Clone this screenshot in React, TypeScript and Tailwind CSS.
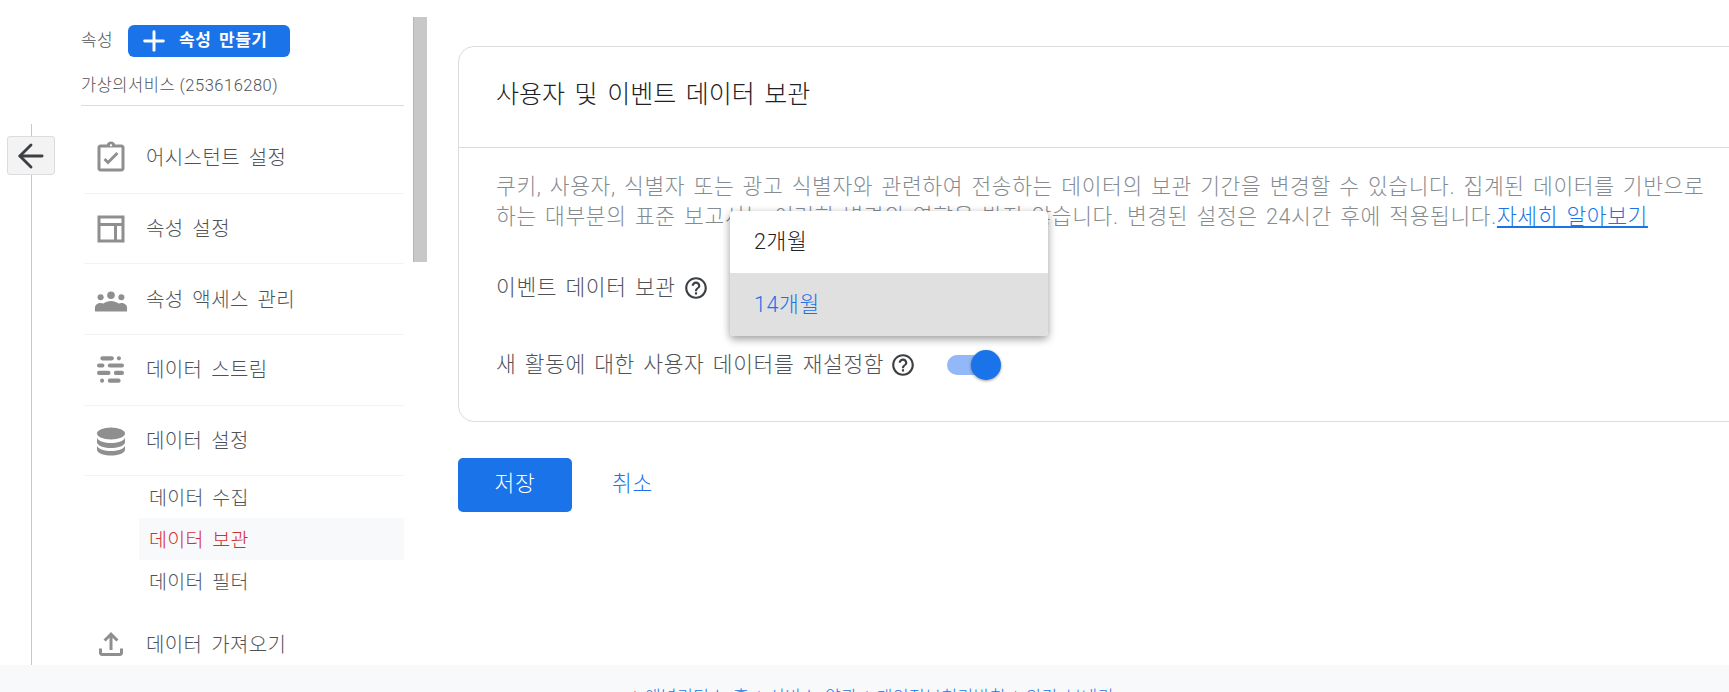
import { ArrowLeft, Plus } from "lucide-react";

const AssistantIcon = () => (
  <svg width="36" height="36" viewBox="0 0 24 24" fill="#8f8f8f">
    <path d="M19 3h-4.180C14.400 1.840 13.300 1 12 1s-2.400.84-2.820 2H5c-1.100 0-2 .9-2 2v14c0 1.100.9 2 2 2h14c1.100 0 2-.9 2-2V5c0-1.100-.9-2-2-2zm-7-.25c.41 0 .75.34.75.75s-.34.75-.75.75-.75-.34-.75-.75.34-.75.75-.75zM19 19H5V5h14v14zm-2-9.600L15.600 8l-5.600 5.600-1.600-1.600L7 13.400l3 3z" />
  </svg>
);

const LayoutIcon = () => (
  <svg width="36" height="36" viewBox="0 0 24 24" fill="#8f8f8f">
    <path d="M3 3v18h18V3H3zm16 2v3H5V5h14zM5 19v-9h9v9H5zm11 0v-9h3v9h-3z" />
  </svg>
);

const PeopleIcon = () => (
  <svg width="34" height="24" viewBox="0 0 36 24" fill="#8f8f8f" className="mt-[4px]">
    <circle cx="18" cy="6" r="4" />
    <circle cx="7" cy="8" r="3.200" />
    <circle cx="29" cy="8" r="3.200" />
    <path d="M1 23v-4c0-3 3-5 6-5 1 0 2 .2 3 .7C12 13 15 12 18 12s6 1 8 2.700c1-.5 2-.7 3-.7 3 0 6 2 6 5v4z" />
  </svg>
);

const StreamIcon = () => (
  <svg width="27" height="27" viewBox="0 0 80 80" fill="#8f8f8f">
    <rect x="10" y="1" width="40" height="12" rx="6" />
    <circle cx="65" cy="7" r="6" />
    <rect x="0" y="22" width="22" height="12" rx="6" />
    <rect x="32" y="22" width="48" height="12" rx="6" />
    <rect x="0" y="44" width="40" height="12" rx="6" />
    <rect x="50" y="44" width="30" height="12" rx="6" />
    <circle cx="15" cy="73" r="6" />
    <rect x="32" y="67" width="38" height="12" rx="6" />
  </svg>
);

const DatabaseIcon = () => (
  <svg width="30" height="30" viewBox="0 0 30 30" fill="#8f8f8f">
    <ellipse cx="15" cy="7.500" rx="14" ry="6" />
    <path d="M1 11.500c1 4 8 5.500 14 5.500s13-1.500 14-5.500v5c-1 4-8 5.500-14 5.500S2 20.500 1 16.500z" />
    <path d="M1 19.500c1 4 8 5.500 14 5.500s13-1.500 14-5.500v4.500c-1 4-8 5.500-14 5.500S2 28 1 24z" />
  </svg>
);

const UploadIcon = () => (
  <svg width="36" height="36" viewBox="0 0 24 24" fill="#8f8f8f">
    <path d="M18 15v3H6v-3H4v3c0 1.100.9 2 2 2h12c1.100 0 2-.9 2-2v-3h-2zM7 9l1.410 1.410L11 7.830V16h2V7.830l2.590 2.580L17 9l-5-5-5 5z" />
  </svg>
);

const HelpIcon = () => (
  <svg width="26" height="26" viewBox="0 0 24 24" fill="#3c4043">
    <path d="M11 18h2v-2h-2v2zm1-16C6.480 2 2 6.480 2 12s4.480 10 10 10 10-4.480 10-10S17.520 2 12 2zm0 18c-4.410 0-8-3.590-8-8s3.590-8 8-8 8 3.590 8 8-3.590 8-8 8zm0-14c-2.210 0-4 1.790-4 4h2c0-1.100.9-2 2-2s2 .9 2 2c0 2-3 1.750-3 5h2c0-2.250 3-2.500 3-5 0-2.210-1.790-4-4-4z" />
  </svg>
);

const menuItems = [
  { label: "어시스턴트 설정", icon: <AssistantIcon /> },
  { label: "속성 설정", icon: <LayoutIcon /> },
  { label: "속성 액세스 관리", icon: <PeopleIcon /> },
  { label: "데이터 스트림", icon: <StreamIcon /> },
  { label: "데이터 설정", icon: <DatabaseIcon /> },
];

const subItems = ["데이터 수집", "데이터 보관", "데이터 필터"];

const App = () => {
  return (
    <div className="flex h-[692px] w-full flex-col overflow-hidden bg-white font-['Roboto','Noto_Sans_CJK_KR',sans-serif] font-light">
      <div className="flex h-[665px] overflow-hidden">
        {/* back rail */}
        <div className="relative h-full w-[80px] shrink-0 pl-[31px] pt-[124px]">
          <div className="h-full w-px bg-[#c8c8c8]" />
          <button className="absolute left-[7px] top-[136px] flex h-[39px] w-[48px] items-center justify-center rounded-[3px] border border-[#dadce0] bg-[#f3f3f3]">
            <ArrowLeft className="shrink-0" size={38} strokeWidth={1.800} color="#3c4043" />
          </button>
        </div>

        {/* property column */}
        <div className="w-[325px] shrink-0 pr-[1px]">
          <div className="mt-[25px] flex h-[32px] items-center">
            <span className="ml-[1px] w-[47px] text-[17px] tracking-[0.3px] text-[#4f5357]">속성</span>
            <button className="flex h-[32px] w-[162px] items-center rounded-[6px] bg-[#1a73e8] pl-[10px] text-[17px] font-bold tracking-[0.5px] text-white [word-spacing:3px]">
              <Plus size={32} strokeWidth={2.200} />
              <span className="ml-[9px]">속성 만들기</span>
            </button>
          </div>
          <div className="ml-[1px] mt-[19px] h-[30px] border-b border-[#dadce0] text-[16.500px] leading-[20px] tracking-[0.5px] text-[#4f5357]">
            가상의서비스 (253616280)
          </div>

          <div className="ml-[4px] mt-[17px]">
            {menuItems.map((item) => (
              <div
                key={item.label}
                className="flex h-[70.700px] items-center border-b border-[#f1f3f4]"
              >
                <div className="flex w-[53px] shrink-0 justify-center">{item.icon}</div>
                <span className="ml-[9px] pt-[1px] text-[20px] tracking-[0.4px] text-[#4f5357] [word-spacing:3.500px]">
                  {item.label}
                </span>
              </div>
            ))}
            <div className="pl-[55px]">
              {subItems.map((label) => (
                <div
                  key={label}
                  className={`flex h-[42px] items-center pl-[10px] pt-[2px] text-[19.500px] tracking-[0.3px] [word-spacing:3.500px] ${
                    label === "데이터 보관" ? "bg-[#f8f9fa] text-[#d32f2f]" : "text-[#4f5357]"
                  }`}
                >
                  {label}
                </div>
              ))}
            </div>
            <div className="mt-[17px] flex h-[50px] items-center">
              <div className="flex w-[53px] shrink-0 justify-center">
                <UploadIcon />
              </div>
              <span className="ml-[9px] pt-[1px] text-[20px] tracking-[0.4px] text-[#4f5357] [word-spacing:3.500px]">
                데이터 가져오기
              </span>
            </div>
          </div>
        </div>

        {/* scrollbar */}
        <div className="ml-[8px] mt-[17px] h-[245px] w-[14px] shrink-0 border-l border-[#b5b5b5] bg-[#c8c8c8]" />

        {/* main */}
        <div className="ml-[31px] min-w-0 flex-1 pt-[46px]">
          <div className="relative h-[376px] w-[1300px] rounded-[16px] border border-[#dadce0]">
            <div className="flex h-[101px] items-center border-b border-[#dadce0] pb-[5px] pl-[37px] text-[25px] text-[#202124] [word-spacing:3.500px]">
              사용자 및 이벤트 데이터 보관
            </div>
            <div className="pl-[37px] pt-[24px] text-[21.500px] leading-[30px] tracking-[0.6px] text-[#868b90] [word-spacing:2.500px]">
              <p className="whitespace-nowrap">
                쿠키, 사용자, 식별자 또는 광고 식별자와 관련하여 전송하는 데이터의 보관 기간을 변경할 수 있습니다. 집계된 데이터를 기반으로
              </p>
              <p className="whitespace-nowrap">
                하는 대부분의 표준 보고서는 이러한 변경의 영향을 받지 않습니다. 변경된 설정은 24시간 후에 적용됩니다.
                <a className="text-[#1a73e8] underline">자세히 알아보기</a>
              </p>
            </div>

            <div className="mt-[43px] flex h-[26px] items-center pl-[37px] text-[21.500px] tracking-[0.6px] text-[#4f5357] [word-spacing:2.500px]">
              <span>이벤트 데이터 보관</span>
              <span className="ml-[7px]">
                <HelpIcon />
              </span>
            </div>
            <div className="mt-[49px] flex h-[30px] items-center pl-[37px] text-[21.500px] tracking-[0.6px] text-[#4f5357] [word-spacing:2.500px]">
              <span>새 활동에 대한 사용자 데이터를 재설정함</span>
              <span className="ml-[6px]">
                <HelpIcon />
              </span>
              <div className="relative ml-[31px] h-[20px] w-[44px] rounded-full bg-[#93b8f7]">
                <div className="absolute left-[24px] top-[-5px] h-[30px] w-[30px] rounded-full bg-[#1a73e8] shadow-[0_1px_3px_rgba(0,0,0,0.4)]" />
              </div>
            </div>

            {/* open dropdown */}
            <div className="absolute left-[271px] top-[164px] w-[318px] overflow-hidden rounded-[4px] bg-white text-[21.500px] tracking-[0.6px] shadow-[0_3px_8px_rgba(0,0,0,0.4)]">
              <div className="flex h-[62px] items-center pl-[24px] text-[#202124]">2개월</div>
              <div className="flex h-[63px] items-center bg-[#e0e0e0] pl-[24px] pt-[1px] text-[#1a73e8]">14개월</div>
            </div>
          </div>

          <div className="mt-[36px] flex items-center">
            <button className="h-[54px] w-[114px] rounded-[5px] bg-[#1a73e8] pb-[2px] text-[21.500px] tracking-[0.6px] text-white">
              저장
            </button>
            <button className="ml-[26px] px-[14px] pb-[2px] text-[21.500px] tracking-[0.6px] text-[#1a73e8]">
              취소
            </button>
          </div>
        </div>
      </div>

      {/* footer */}
      <div className="h-[27px] whitespace-nowrap bg-[#f8f9fa] pl-[633px] pt-[22px] text-[17px] leading-[20px] tracking-[0.5px] text-[#1a73e8] [word-spacing:3px]">
        <span className="text-[#5f6368]">|</span> 애널리틱스 홈 | 서비스 약관 | 개인정보처리방침 | 의견 보내기
      </div>
    </div>
  );
};

export default App;
